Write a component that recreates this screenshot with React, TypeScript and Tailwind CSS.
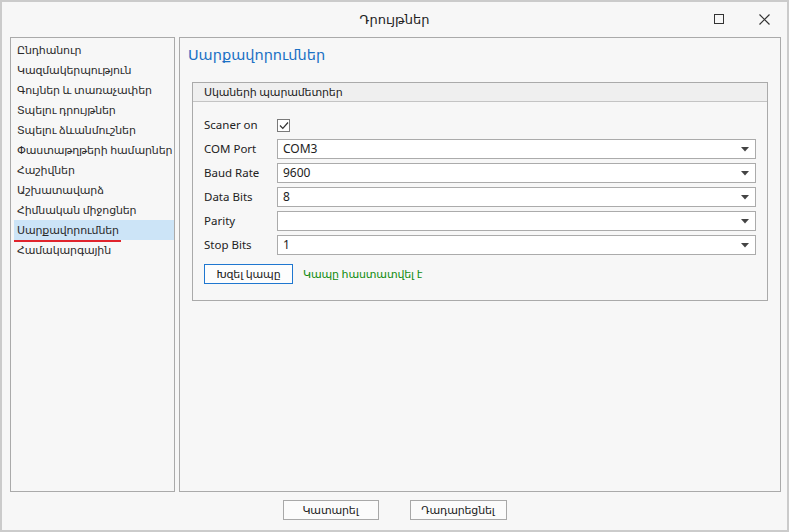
import React from "react";

const items = [
  "Ընդհանուր",
  "Կազմակերպություն",
  "Գույներ և տառաչափեր",
  "Տպելու դրույթներ",
  "Տպելու ձևանմուշներ",
  "Փաստաթղթերի համարներ",
  "Հաշիվներ",
  "Աշխատավարձ",
  "Հիմնական միջոցներ",
  "Սարքավորումներ",
  "Համակարգային",
];

const font = { fontFamily: '"Noto Sans", "DejaVu Sans", sans-serif' };

function Select({ value }: { value: string }) {
  return (
    <div className="flex-1 h-[20px] border border-[#ababab] bg-white flex items-center justify-between pl-[5px] pr-[6px]">
      <span className="text-[12px] text-[#222]">{value}</span>
      <svg width="8" height="5" viewBox="0 0 8 5">
        <polygon points="0,0 8,0 4,4.5" fill="#444" />
      </svg>
    </div>
  );
}

function Row({ label, value }: { label: string; value: string }) {
  return (
    <div className="flex items-center h-[20px]">
      <div className="w-[73px] text-[11.5px] text-[#222]">{label}</div>
      <Select value={value} />
    </div>
  );
}

export default function App() {
  return (
    <div
      className="w-[789px] h-[532px] border-2 border-[#cbcbcb] bg-[#f7f7f7] flex flex-col text-[#222]"
      style={font}
    >
      {/* Title bar */}
      <div className="h-[35px] relative flex items-center justify-center shrink-0">
        <span className="text-[13px] text-[#222] mt-[1px]">Դրույթներ</span>
        <div className="absolute left-[712px] top-[12px] w-[10px] h-[10px] border border-[#333]" />
        <svg
          className="absolute left-[757px] top-[12px]"
          width="11"
          height="11"
          viewBox="0 0 11 11"
        >
          <path d="M0.5 0.5 L10.5 10.5 M10.5 0.5 L0.5 10.5" stroke="#333" strokeWidth="1.2" />
        </svg>
      </div>

      {/* Body */}
      <div className="flex pl-[8px] pr-[6px] gap-[4px] h-[455px] shrink-0">
        {/* Left list */}
        <div className="w-[165px] border border-[#aaaaaa] pt-[2px]">
          {items.map((it, i) => (
            <div
              key={it}
              className={
                "relative h-[20px] ml-[3px] pl-[3px] flex items-center text-[11px] tracking-[-0.15px] whitespace-nowrap text-[#2a2a2a] " +
                (i === 9 ? "bg-[#cce4f7]" : "")
              }
            >
              {it}
              {i === 9 && (
                <div className="absolute left-0 bottom-[-2px] w-[107px] h-[2px] bg-[#e0242c]" />
              )}
            </div>
          ))}
        </div>

        {/* Right panel */}
        <div className="flex-1 border border-[#aaaaaa] px-[12px] pt-[4px]">
          <div className="-ml-[4px] text-[14.5px] text-[#1a70c4] h-[25px] leading-[25px]">
            Սարքավորումներ
          </div>
          <div className="mt-[15px] border border-[#aaaaaa] h-[219px]">
            <div className="h-[19px] bg-[#efefef] border-b border-[#c4c4c4] pl-[11px] flex items-center text-[11px] tracking-[-0.15px]">
              Սկաների պարամետրեր
            </div>
            <div className="px-[11px] pt-[13px] flex flex-col gap-[4px]">
              <div className="flex items-center h-[20px]">
                <div className="w-[73px] text-[11.5px]">Scaner on</div>
                <div className="w-[13px] h-[13px] border border-[#7a7a7a] bg-white flex items-center justify-center">
                  <svg width="10" height="9" viewBox="0 0 10 9">
                    <path d="M1 4.5 L3.8 7.3 L9 1.5" stroke="#333" strokeWidth="1.2" fill="none" />
                  </svg>
                </div>
              </div>
              <Row label="COM Port" value="COM3" />
              <Row label="Baud Rate" value="9600" />
              <Row label="Data Bits" value="8" />
              <Row label="Parity" value="" />
              <Row label="Stop Bits" value="1" />
              <div className="flex items-center mt-[5px] gap-[10px]">
                <button className="w-[89px] h-[20px] border border-[#1f77d0] bg-[#fdfdfd] text-[11px] tracking-[-0.15px] flex items-center justify-center">
                  Խզել կապը
                </button>
                <span className="text-[11px] tracking-[-0.15px] text-[#0f8c0f]">Կապը հաստատվել է</span>
              </div>
            </div>
          </div>
        </div>
      </div>

      {/* Footer */}
      <div className="flex-1 flex items-start justify-center gap-[31px] pt-[8px]">
        <button className="w-[96px] h-[20px] border border-[#a8a8a8] bg-[#fbfbfb] text-[11px] tracking-[-0.15px] flex items-center justify-center">
          Կատարել
        </button>
        <button className="w-[97px] h-[20px] border border-[#a8a8a8] bg-[#fbfbfb] text-[11px] tracking-[-0.15px] flex items-center justify-center">
          Դադարեցնել
        </button>
      </div>
    </div>
  );
}
